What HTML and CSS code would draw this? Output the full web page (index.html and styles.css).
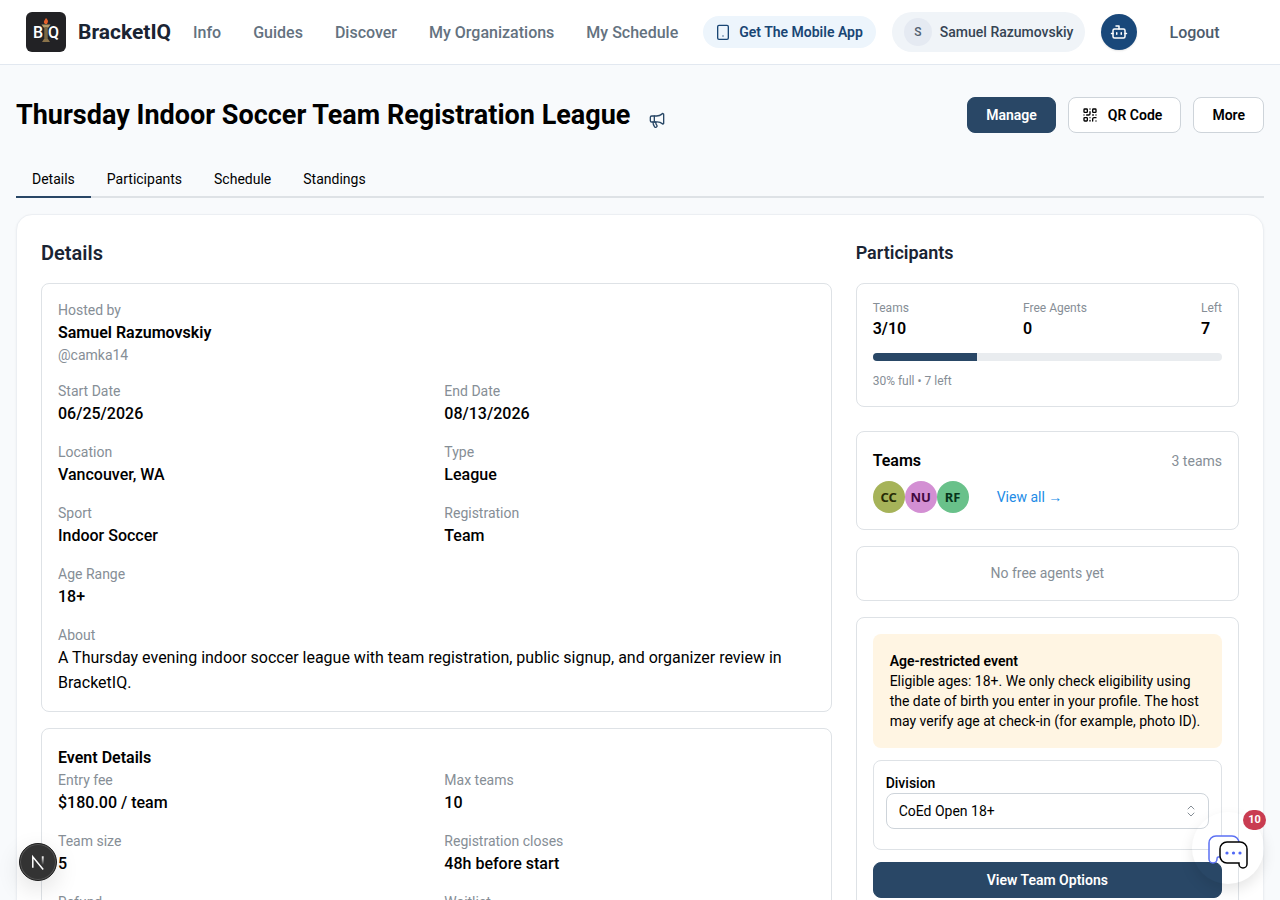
FILE: index.html
```html
<!DOCTYPE html>
<html lang="en">
<head>
    <meta charset="UTF-8">
    <meta name="viewport" content="width=device-width, initial-scale=1.0">
    <title>Thursday Indoor Soccer Team Registration League - BracketIQ</title>
    <link rel="stylesheet" href="styles.css">
</head>
<body>
    <header class="site-header">
        <a href="#" class="brand">
            <svg class="brand-logo" viewBox="0 0 40 40" aria-hidden="true">
                <rect width="40" height="40" rx="6" fill="#222225"/>
                <text x="7" y="26" class="logo-letter">B</text>
                <text x="22" y="26" class="logo-letter">Q</text>
                <path d="M15.500 12.500h9l-2 3h-5z" fill="#b39a68"/>
                <path d="M18.500 15h3v12h-3z" fill="#a18a5b"/>
                <path d="M20 15v12" stroke="#544728" stroke-width="1"/>
                <path d="M18 27h4l2 3h-8z" fill="#8a734a"/>
                <path d="M20 6c3 3 2 4 1 6h-2c-2-2-1-3 1-6z" fill="#e5602a"/>
            </svg>
            <span class="brand-name">BracketIQ</span>
        </a>
        <nav class="site-nav">
            <a href="#">Info</a>
            <a href="#">Guides</a>
            <a href="#">Discover</a>
            <a href="#">My Organizations</a>
            <a href="#">My Schedule</a>
        </nav>
        <div class="header-actions">
            <a href="#" class="app-link">
                <svg class="icon" viewBox="0 0 24 24"><rect x="4" y="2" width="16" height="21" rx="2"/><path d="M12 18h.01"/></svg>
                Get The Mobile App
            </a>
            <button type="button" class="user-pill">
                <span class="user-initial">S</span>
                Samuel Razumovskiy
            </button>
            <button type="button" class="bot-button" aria-label="Assistant">
                <svg class="icon bot-icon" viewBox="0 0 24 24"><path d="M12 8V4H8"/><rect x="4" y="8" width="16" height="12" rx="2"/><path d="M2 14h2M20 14h2M15 13v2M9 13v2"/></svg>
            </button>
            <button type="button" class="logout">Logout</button>
        </div>
    </header>

    <main class="page">
        <div class="title-row">
            <h1>Thursday Indoor Soccer Team Registration League</h1>
            <button type="button" class="announce" aria-label="Announce">
                <svg class="icon" viewBox="0 0 24 24"><path d="M11 6a13 13 0 0 0 8.400-2.800A1 1 0 0 1 22 4v13a1 1 0 0 1-1.600.800A13 13 0 0 0 11 15H4a2 2 0 0 1-2-2V8a2 2 0 0 1 2-2z"/><path d="M6 15a12 12 0 0 0 2.400 7.200 2 2 0 0 0 3.200-2.400A8 8 0 0 1 10 15"/><path d="M8 6v9"/></svg>
            </button>
            <div class="title-actions">
                <button type="button" class="btn btn-primary">Manage</button>
                <button type="button" class="btn btn-icon">
                    <svg class="icon" viewBox="0 0 24 24"><rect x="3" y="3" width="5" height="5" rx="1"/><rect x="16" y="3" width="5" height="5" rx="1"/><rect x="3" y="16" width="5" height="5" rx="1"/><path d="M21 16h-3a2 2 0 0 0-2 2v3M21 21v.01M12 7v3a2 2 0 0 1-2 2H7M3 12h.01M12 3h.01M12 16v.01M16 12h1M21 12v.01M12 21v-1"/></svg>
                    QR Code
                </button>
                <button type="button" class="btn">More</button>
            </div>
        </div>

        <div class="tabs" role="tablist">
            <button type="button" class="tab active" role="tab" aria-selected="true">Details</button>
            <button type="button" class="tab" role="tab">Participants</button>
            <button type="button" class="tab" role="tab">Schedule</button>
            <button type="button" class="tab" role="tab">Standings</button>
        </div>

        <div class="content">
            <section class="main-column">
                <h2>Details</h2>
                <div class="card">
                    <div class="host">
                        <div class="label">Hosted by</div>
                        <div class="value strong">Samuel Razumovskiy</div>
                        <div class="label">@camka14</div>
                    </div>
                    <dl class="facts">
                        <div><dt class="label">Start Date</dt><dd class="value">06/25/2026</dd></div>
                        <div><dt class="label">End Date</dt><dd class="value">08/13/2026</dd></div>
                        <div><dt class="label">Location</dt><dd class="value">Vancouver, WA</dd></div>
                        <div><dt class="label">Type</dt><dd class="value">League</dd></div>
                        <div><dt class="label">Sport</dt><dd class="value">Indoor Soccer</dd></div>
                        <div><dt class="label">Registration</dt><dd class="value">Team</dd></div>
                        <div class="wide"><dt class="label">Age Range</dt><dd class="value">18+</dd></div>
                        <div class="wide"><dt class="label">About</dt><dd class="about">A Thursday evening indoor soccer league with team registration, public signup, and organizer review in BracketIQ.</dd></div>
                    </dl>
                </div>

                <div class="card">
                    <h3>Event Details</h3>
                    <dl class="facts">
                        <div><dt class="label">Entry fee</dt><dd class="value">$180.00 / team</dd></div>
                        <div><dt class="label">Max teams</dt><dd class="value">10</dd></div>
                        <div><dt class="label">Team size</dt><dd class="value">5</dd></div>
                        <div><dt class="label">Registration closes</dt><dd class="value">48h before start</dd></div>
                        <div><dt class="label">Refund</dt></div>
                        <div><dt class="label">Waitlist</dt></div>
                    </dl>
                </div>
            </section>

            <aside class="side-column">
                <h2 class="side-title">Participants</h2>
                <div class="card capacity">
                    <div class="metrics">
                        <div><div class="metric-label">Teams</div><div class="metric-value">3/10</div></div>
                        <div><div class="metric-label">Free Agents</div><div class="metric-value">0</div></div>
                        <div><div class="metric-label">Left</div><div class="metric-value">7</div></div>
                    </div>
                    <div class="progress"><div class="progress-bar" style="width: 30%"></div></div>
                    <div class="metric-label">30% full • 7 left</div>
                </div>

                <div class="card">
                    <div class="card-head">
                        <h3>Teams</h3>
                        <span class="label">3 teams</span>
                    </div>
                    <div class="teams">
                        <span class="avatar olive">CC</span>
                        <span class="avatar pink">NU</span>
                        <span class="avatar green">RF</span>
                        <a href="#" class="view-all">View all <span class="arrow">→</span></a>
                    </div>
                </div>

                <div class="card empty">No free agents yet</div>

                <div class="card register">
                    <div class="notice">
                        <strong>Age-restricted event</strong>
                        <p>Eligible ages: 18+. We only check eligibility using the date of birth you enter in your profile. The host may verify age at check-in (for example, photo ID).</p>
                    </div>
                    <div class="division">
                        <label for="division">Division</label>
                        <div class="select-wrap">
                            <select id="division">
                                <option>CoEd Open 18+</option>
                            </select>
                            <svg class="select-arrows" viewBox="0 0 16 16"><path d="M5 6l3-3 3 3M5 10l3 3 3-3"/></svg>
                        </div>
                    </div>
                    <button type="button" class="btn btn-primary btn-block">View Team Options</button>
                </div>
            </aside>
        </div>
    </main>

    <button type="button" class="dev-badge" aria-label="Dev tools">
        <svg viewBox="0 0 38 38">
            <defs>
                <linearGradient id="fadeStem" x1="0" y1="0" x2="0" y2="1"><stop offset="0" stop-color="#fff"/><stop offset="1" stop-color="#fff" stop-opacity="0"/></linearGradient>
            </defs>
            <path d="M13.500 25V13.500l11 13.500" fill="none" stroke="#fff" stroke-width="1.600"/>
            <rect x="23" y="13" width="2" height="9" fill="url(#fadeStem)"/>
        </svg>
    </button>

    <button type="button" class="chat-button" aria-label="Messages">
        <svg viewBox="0 0 40 36">
            <path d="M8 2h16a7 7 0 0 1 7 7v14H10c-1 0-1 1-1 2a4 4 0 0 1-8 0V9a7 7 0 0 1 7-7z" fill="#fff" stroke="#5b70f3" stroke-width="1.500"/>
            <path d="M19 8h13a7 7 0 0 1 7 7v15a4 4 0 0 1-8 0v-1H19a7 7 0 0 1-7-7v-7a7 7 0 0 1 7-7z" fill="#fff" stroke="#000" stroke-width="1.500"/>
            <circle cx="19" cy="19" r="1.600" fill="#4f67f5"/>
            <circle cx="25.500" cy="19" r="1.600" fill="#4f67f5"/>
            <circle cx="32" cy="19" r="1.600" fill="#4f67f5"/>
        </svg>
        <span class="chat-count">10</span>
    </button>
</body>
</html>
```

FILE: styles.css
```css
* {
    box-sizing: border-box;
}

body {
    margin: 0;
    background-color: #f8fafc;
    color: #000;
    font-family: Roboto, "Liberation Sans", sans-serif;
    font-size: 16px;
    line-height: 25px;
}

h1, h2, h3, p, dl, dd {
    margin: 0;
}

a {
    color: inherit;
    text-decoration: none;
}

button, select {
    font-family: inherit;
    cursor: pointer;
}

.icon {
    width: 16px;
    height: 16px;
    flex-shrink: 0;
    fill: none;
    stroke: currentColor;
    stroke-width: 2;
    stroke-linecap: round;
    stroke-linejoin: round;
}

/* header */
.site-header {
    display: flex;
    align-items: center;
    height: 65px;
    padding: 0 26px;
    background-color: #fff;
    border-bottom: 1px solid #e2e8f0;
    white-space: nowrap;
}

.brand {
    display: flex;
    align-items: center;
    gap: 12px;
    margin-right: 22px;
}

.brand-logo {
    width: 40px;
    height: 40px;
}

.logo-letter {
    fill: #fff;
    font-size: 16px;
    font-weight: 500;
}

.brand-name {
    color: #1a2433;
    font-size: 21px;
    font-weight: 700;
}

.site-nav {
    display: flex;
    gap: 32px;
    color: #64727f;
    font-weight: 500;
}

.header-actions {
    display: flex;
    align-items: center;
    gap: 16px;
    margin-left: 25px;
}

.app-link {
    display: flex;
    align-items: center;
    gap: 8px;
    height: 32px;
    padding: 0 13px 0 12px;
    border-radius: 16px;
    background-color: #edf5fc;
    color: #194674;
    font-size: 14px;
    font-weight: 600;
}

.user-pill {
    display: flex;
    align-items: center;
    gap: 8px;
    height: 40px;
    padding: 0 12px;
    border: none;
    border-radius: 20px;
    background-color: #f0f4f8;
    color: #364454;
    font-size: 14px;
    font-weight: 500;
}

.user-initial {
    width: 28px;
    border-radius: 14px;
    background-color: #e5eaf2;
    color: #526070;
    font-size: 12px;
    line-height: 28px;
    text-align: center;
}

.bot-button {
    display: flex;
    align-items: center;
    justify-content: center;
    width: 36px;
    height: 36px;
    padding: 0;
    border: none;
    border-radius: 50%;
    background-color: #19487a;
    color: #fff;
    box-shadow: 0 1px 2px rgba(0, 0, 0, 0.1);
}

.bot-icon {
    width: 18px;
    height: 18px;
}

.logout {
    padding: 8px 16px;
    border: none;
    background: none;
    color: #4d5c6c;
    font-size: 16px;
    font-weight: 500;
}

/* title */
.page {
    padding: 32px 16px;
}

.title-row {
    display: flex;
    align-items: center;
    margin-bottom: 29px;
}

h1 {
    font-size: 27px;
    font-weight: 700;
    line-height: 35px;
}

.announce {
    align-self: flex-end;
    display: flex;
    margin-left: 12px;
    padding: 5px 7px;
    border: none;
    background: none;
    color: #294766;
}

.title-actions {
    display: flex;
    gap: 12px;
    margin-left: auto;
}

.btn {
    height: 36px;
    padding: 0 18px;
    border: 1px solid #ced4da;
    border-radius: 8px;
    background-color: #fff;
    color: #000;
    font-size: 14px;
    font-weight: 600;
}

.btn-icon {
    display: flex;
    align-items: center;
    gap: 10px;
    padding-left: 13px;
}

.btn-primary {
    border-color: #294766;
    background-color: #294766;
    color: #fff;
}

.btn-block {
    width: 100%;
}

/* tabs */
.tabs {
    display: flex;
    margin-bottom: 16px;
    box-shadow: inset 0 -2px #dee2e6;
}

.tab {
    padding: 10px 16px;
    border: none;
    border-bottom: 2px solid transparent;
    background: none;
    color: #000;
    font-size: 14px;
    line-height: 14px;
}

.tab.active {
    border-bottom-color: #294766;
}

/* content */
.content {
    display: grid;
    grid-template-columns: repeat(3, 1fr);
    gap: 24px;
    padding: 24px;
    border: 1px solid #eceff3;
    border-radius: 16px;
    background-color: #fff;
    box-shadow: 0 1px 3px rgba(0, 0, 0, 0.05);
}

.main-column {
    grid-column: span 2;
}

h2 {
    margin-bottom: 16px;
    color: #1a2433;
    font-size: 20px;
    font-weight: 600;
    line-height: 28px;
}

.side-title {
    font-size: 18px;
}

h3 {
    font-size: 16px;
    font-weight: 600;
}

.card {
    margin-bottom: 16px;
    padding: 16px;
    border: 1px solid #dee2e6;
    border-radius: 8px;
}

.label {
    color: #868e96;
    font-size: 14px;
    line-height: 20px;
}

.value {
    font-weight: 500;
}

.strong {
    font-weight: 600;
}

.host {
    margin-bottom: 16px;
}

.facts {
    display: grid;
    grid-template-columns: repeat(2, 1fr);
    gap: 16px;
}

.wide {
    grid-column: span 2;
}

/* participants */
.capacity {
    margin-bottom: 24px;
}

.metrics {
    display: flex;
    justify-content: space-between;
}

.metric-label {
    color: #868e96;
    font-size: 12px;
    line-height: 17px;
}

.metric-value {
    font-weight: 600;
    line-height: 24px;
}

.progress {
    height: 8px;
    margin: 12px 0;
    border-radius: 4px;
    background-color: #e9ecef;
    overflow: hidden;
}

.progress-bar {
    height: 100%;
    background-color: #294766;
}

.card-head {
    display: flex;
    align-items: center;
    justify-content: space-between;
    margin-bottom: 8px;
}

.teams {
    display: flex;
    align-items: center;
}

.avatar {
    width: 32px;
    border-radius: 50%;
    font-family: "Noto Sans", sans-serif;
    font-size: 13px;
    font-weight: 700;
    line-height: 32px;
    text-align: center;
}

.olive {
    background-color: #a6b359;
    color: #262b05;
}

.pink {
    background-color: #d38fd3;
    color: #42083f;
}

.green {
    background-color: #69c18a;
    color: #06351a;
}

.view-all {
    margin-left: 28px;
    color: #228be6;
    font-size: 14px;
}

.arrow {
    font-family: "Liberation Sans", sans-serif;
}

.empty {
    color: #868e96;
    font-size: 14px;
    line-height: 21px;
    text-align: center;
}

.register {
    display: flex;
    flex-direction: column;
    gap: 12px;
}

.notice {
    padding: 17px;
    border-radius: 8px;
    background-color: #fff5e3;
    font-size: 14px;
    line-height: 20px;
}

.notice strong {
    font-weight: 600;
}

.division {
    padding: 12px 12px 20px;
    border: 1px solid #dee2e6;
    border-radius: 8px;
}

.division label {
    display: block;
    font-size: 14px;
    font-weight: 500;
    line-height: 20px;
}

.select-wrap {
    position: relative;
}

select {
    display: block;
    width: 100%;
    height: 36px;
    padding: 0 12px;
    border: 1px solid #ced4da;
    border-radius: 8px;
    background-color: #fff;
    color: #000;
    font-size: 14px;
    appearance: none;
}

.select-arrows {
    position: absolute;
    top: 10px;
    right: 10px;
    width: 16px;
    height: 16px;
    fill: none;
    stroke: #868e96;
    stroke-linecap: round;
    stroke-linejoin: round;
    pointer-events: none;
}

/* floating buttons */
.dev-badge {
    position: fixed;
    left: 19px;
    bottom: 19px;
    width: 38px;
    height: 38px;
    padding: 0;
    border: 1px solid #1c1c1c;
    border-radius: 50%;
    background-color: #333;
    box-shadow: inset 0 0 0 1px #555, 0 8px 24px rgba(0, 0, 0, 0.12);
}

.dev-badge svg {
    display: block;
}

.chat-button {
    position: fixed;
    right: 16px;
    bottom: 16px;
    display: flex;
    align-items: center;
    justify-content: center;
    width: 72px;
    height: 72px;
    padding: 8px 0 0;
    border: none;
    border-radius: 50%;
    background: none;
    box-shadow: 0 6px 14px rgba(0, 0, 0, 0.1);
}

.chat-button svg {
    width: 40px;
    height: 36px;
}

.chat-count {
    position: absolute;
    top: -2px;
    right: -2px;
    min-width: 23px;
    border-radius: 10px;
    background-color: #c93c51;
    color: #fff;
    font-size: 11px;
    font-weight: 700;
    line-height: 20px;
    text-align: center;
}
```
